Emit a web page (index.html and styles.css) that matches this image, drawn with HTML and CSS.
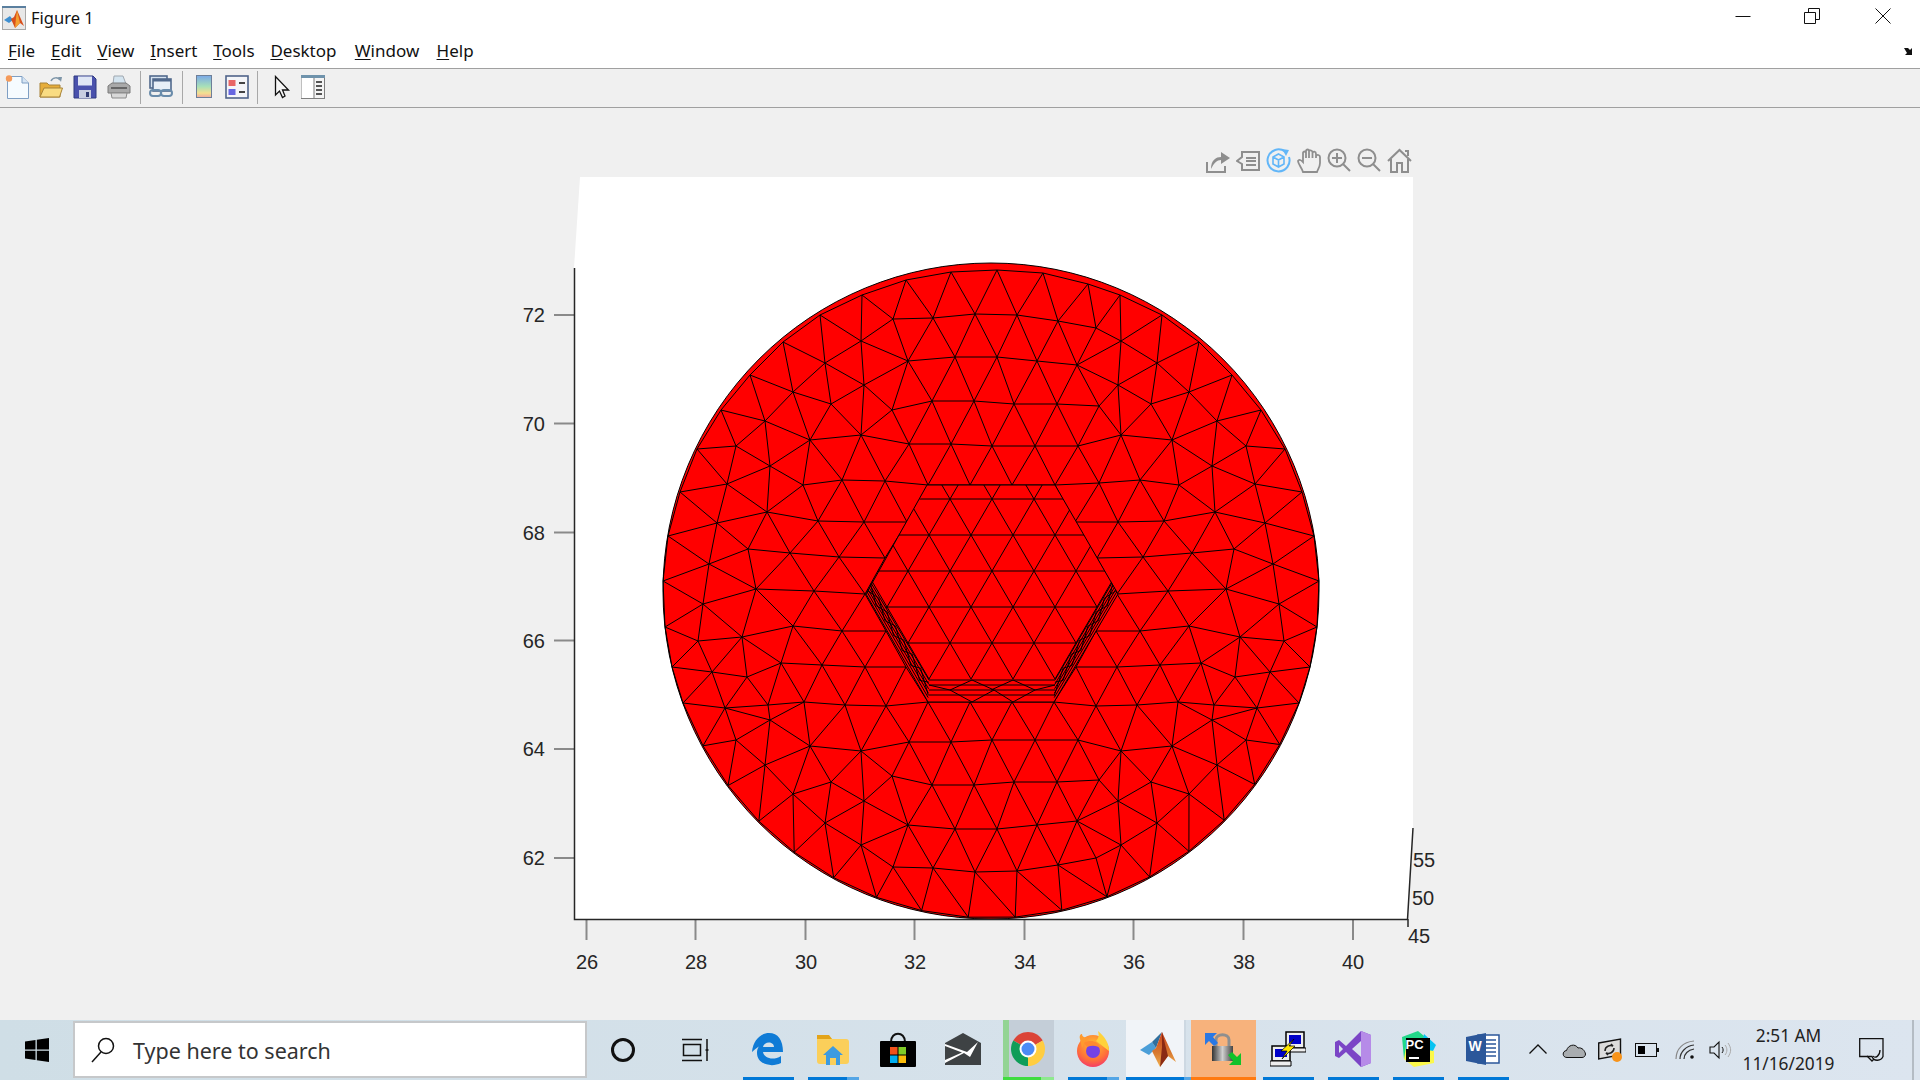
FILE: index.html
```html
<!DOCTYPE html>
<html lang="en">
<head>
<meta charset="utf-8">
<title>Figure 1</title>
<link rel="stylesheet" href="styles.css">
</head>
<body>
<div class="app">
  <header class="titlebar">
    <svg class="app-icon" width="24" height="24" viewBox="0 0 24 24">
      <rect x="0.5" y="0.5" width="23" height="23" fill="#e8e8e8" stroke="#a8a8a8"/>
      <rect x="0" y="0" width="24" height="2" fill="#5a7f9f"/>
      <polygon points="2,14 8,10 11,14 7,17" fill="#3f8fd0"/>
      <polygon points="15,4 22,20 18,17 13,22 9,13 12,11" fill="#d8501c"/>
      <polygon points="15,4 18,17 13,22 14,12" fill="#f4a030"/>
    </svg>
    <span class="title-text">Figure 1</span>
    <div class="win-controls">
      <svg class="win-min" width="16" height="16" viewBox="0 0 16 16"><path d="M0.5 8.5H15.5" stroke="#111" fill="none"/></svg>
      <svg width="16" height="16" viewBox="0 0 16 16"><path d="M0.5 4.5H11.5V15.5H0.5ZM4.5 4.5V0.5H15.5V11.5H11.5" stroke="#111" fill="none"/></svg>
      <svg width="16" height="16" viewBox="0 0 16 16"><path d="M0.5 0.5L15.5 15.5M15.5 0.5L0.5 15.5" stroke="#111" fill="none"/></svg>
    </div>
  </header>

  <nav class="menubar">
    <span class="menu-item"><u>F</u>ile</span>
    <span class="menu-item"><u>E</u>dit</span>
    <span class="menu-item"><u>V</u>iew</span>
    <span class="menu-item"><u>I</u>nsert</span>
    <span class="menu-item"><u>T</u>ools</span>
    <span class="menu-item"><u>D</u>esktop</span>
    <span class="menu-item menu-wide"><u>W</u>indow</span>
    <span class="menu-item"><u>H</u>elp</span>
    <svg class="dock-arrow" width="11" height="9" viewBox="0 0 11 9"><path d="M0 1H4L6 3L8 1V8H1L3 6Z" fill="#111"/></svg>
  </nav>

  <div class="toolbar">
    <div class="tool-group g1">
      <svg width="24" height="24" viewBox="0 0 24 24"><path d="M2.5 1.5H17L23.5 8V23.5H2.5Z" fill="#f6fbff" stroke="#7f9fc4"/><path d="M17 1.5V8H23.5" fill="#d5e4f4" stroke="#7f9fc4"/><circle cx="4" cy="3.5" r="3.2" fill="#f59a5a"/></svg>
      <svg width="24" height="24" viewBox="0 0 24 24"><path d="M1 8V22H21V10H10L8 8Z" fill="#e6ad3a" stroke="#a88338"/><path d="M1 22L5 13H23.5L20.5 22Z" fill="#f9dc82" stroke="#a88338"/><path d="M12 6C14 2 19 2 21 5" fill="none" stroke="#7d95a8" stroke-width="1.5"/><path d="M19 2L23 2L22 7Z" fill="#7d95a8"/></svg>
      <svg width="24" height="24" viewBox="0 0 24 24"><path d="M1 1H20L23 4V23H1Z" fill="#4a52ad" stroke="#2f3a80"/><rect x="5" y="1.5" width="14" height="9" fill="#dfe6f5"/><rect x="6" y="15" width="12" height="8" fill="#c8cde0"/><rect x="13" y="17" width="3" height="5" fill="#303a70"/></svg>
      <svg width="24" height="24" viewBox="0 0 24 24"><path d="M6 9L7 1H16L19 9Z" fill="#d4e4ef" stroke="#a0a8b0"/><path d="M1 11L5 8H19L23 11V18H1Z" fill="#a9a9a9" stroke="#7b7b7b"/><path d="M4 18H20L19 23H5Z" fill="#d8d8d8" stroke="#8b8b8b"/><rect x="4" y="12" width="16" height="2" fill="#666"/></svg>
    </div>
    <span class="tool-sep sep-a"></span>
    <div class="tool-group">
      <svg width="24" height="24" viewBox="0 0 24 24"><rect x="1" y="1" width="17" height="12" fill="#d5e2f0" stroke="#51698c" stroke-width="1.6"/><rect x="4" y="4" width="18" height="12" fill="#e8eff7" stroke="#51698c" stroke-width="1.6"/><rect x="4" y="4" width="18" height="2.5" fill="#51698c"/><rect x="1" y="15" width="11" height="6" rx="3" fill="none" stroke="#6a8cab" stroke-width="2"/><rect x="12" y="15" width="11" height="6" rx="3" fill="none" stroke="#6a8cab" stroke-width="2"/></svg>
    </div>
    <span class="tool-sep sep-b"></span>
    <div class="tool-group g3">
      <svg width="24" height="24" viewBox="0 0 24 24"><defs><linearGradient id="cb" x1="0" y1="0" x2="0" y2="1"><stop offset="0" stop-color="#7aa8e8"/><stop offset="0.5" stop-color="#a8e0b8"/><stop offset="0.8" stop-color="#f4e090"/><stop offset="1" stop-color="#f0a8a0"/></linearGradient></defs><rect x="4.5" y="0.5" width="15" height="22" fill="url(#cb)" stroke="#6d7f98"/></svg>
      <svg width="24" height="24" viewBox="0 0 24 24"><rect x="1" y="1" width="22" height="22" fill="#f4f5f8" stroke="#50648a" stroke-width="1.6"/><rect x="3.5" y="5" width="7" height="6" fill="#e86666"/><rect x="3.5" y="14" width="7" height="6" fill="#6666e0"/><rect x="14" y="7" width="6" height="2" fill="#444"/><rect x="14" y="16" width="6" height="2" fill="#444"/></svg>
    </div>
    <span class="tool-sep sep-c"></span>
    <div class="tool-group g4">
      <svg width="24" height="24" viewBox="0 0 24 24"><path d="M5.5 1.5V20L9.5 16L12.5 22.5L15 21L12.5 15H18.5Z" fill="#f6f6f6" stroke="#111" stroke-width="1.3"/></svg>
      <svg width="24" height="24" viewBox="0 0 24 24"><rect x="0.5" y="0.5" width="23" height="23" fill="#f4f4f4" stroke="#7e7e7e"/><rect x="0" y="0" width="24" height="3" fill="#6f93ac"/><rect x="0.5" y="3" width="12" height="20" fill="#fff"/><path d="M13 3V23" stroke="#7e7e7e"/><path d="M15 7H21M15 11H21M15 15H21M15 19H21" stroke="#555" stroke-width="2"/></svg>
    </div>
  </div>

  <main class="figure">
    <div class="axes-tools">
      <svg width="24" height="25" viewBox="0 0 24 25"><path d="M1 14V24H19V18" fill="none" stroke="#8e8e8e" stroke-width="2"/><path d="M5 21C5 12 10 9 15 9V4L24 10L15 16V12C11 12 8 15 5 21Z" fill="#8e8e8e"/></svg>
      <svg width="24" height="25" viewBox="0 0 24 25"><path d="M6 4H23V22H6V16L1 13L6 9Z" fill="none" stroke="#8e8e8e" stroke-width="2"/><path d="M10 10H20M10 13H20M10 17H20" stroke="#8e8e8e" stroke-width="2" fill="none"/></svg>
      <svg width="25" height="25" viewBox="0 0 25 25"><path d="M19 3.5A11 11 0 1 0 23 9" fill="none" stroke="#62b6f8" stroke-width="2"/><path d="M16 1L23 2L20 8Z" fill="#62b6f8"/><path d="M12.5 6L18 9V16L12.5 19L7 16V9ZM7 9L12.5 12L18 9M12.5 12V19" fill="none" stroke="#62b6f8" stroke-width="1.6"/></svg>
      <svg width="24" height="25" viewBox="0 0 24 25"><path d="M6 24C5 20 1 16 1 13C2 11 4 12 6 14V5C6 3 9 3 9 5V10V3C9 1 12 1 12 3V10V3C12 2 15 2 15.500 4V10V5C16 3 19 3 19 6V10V8C20 6 23 7 23 9V15C23 19 21 21 20 24Z" fill="none" stroke="#8e8e8e" stroke-width="1.8"/></svg>
      <svg width="24" height="25" viewBox="0 0 24 25"><circle cx="10" cy="10" r="8.500" fill="none" stroke="#8e8e8e" stroke-width="2"/><path d="M10 5V15M5 10H15M16 16L23 23" stroke="#8e8e8e" stroke-width="2" fill="none"/></svg>
      <svg width="24" height="25" viewBox="0 0 24 25"><circle cx="10" cy="10" r="8.500" fill="none" stroke="#8e8e8e" stroke-width="2"/><path d="M5 10H15M16 16L23 23" stroke="#8e8e8e" stroke-width="2" fill="none"/></svg>
      <svg width="25" height="25" viewBox="0 0 25 25"><path d="M1 13L12.500 2L24 13M4 11V24H10V15H15V24H21V11M18 3H21V8" fill="none" stroke="#8e8e8e" stroke-width="2"/></svg>
    </div>
    <svg class="plot" width="1920" height="912" viewBox="0 108 1920 912">
      <defs><clipPath id="hexclip"><polygon points="928,485 1055,485 1112,583 1055,680 929,680 871,583"/></clipPath></defs>
      <polygon points="580,177 1413,177 1413,828 1407,919 574,919 574,268" fill="#fff"/>
      <circle cx="991" cy="591" r="328" fill="#f00" stroke="#000" stroke-width="1"/>
      <g id="mesh"></g>
      <path class="tick" d="M586.500 919V940M695.500 919V940M805.500 919V940M914.500 919V940M1024.500 919V940M1133.500 919V940M1243.500 919V940M1353 919V940M554 315H574M554 423.500H574M554 532.500H574M554 640.500H574M554 749H574M554 858H574"/>
      <path class="axis" d="M574.500 268V919.500H1407.500L1413 828M1408 919V927"/>
      <g class="lbl lbl-x">
        <text x="587" y="969">26</text><text x="696" y="969">28</text><text x="806" y="969">30</text><text x="915" y="969">32</text><text x="1025" y="969">34</text><text x="1134" y="969">36</text><text x="1244" y="969">38</text><text x="1353" y="969">40</text>
      </g>
      <g class="lbl lbl-y">
        <text x="545" y="322">72</text><text x="545" y="431">70</text><text x="545" y="540">68</text><text x="545" y="648">66</text><text x="545" y="756">64</text><text x="545" y="865">62</text>
      </g>
      <g class="lbl">
        <text x="1413" y="867">55</text><text x="1412" y="905">50</text><text x="1408" y="943">45</text>
      </g>
    </svg>
  </main>

  <footer class="taskbar">
    <div class="start">
      <svg width="24" height="24" viewBox="0 0 24 24"><path d="M0 3.500L10.500 2V11.500H0ZM11.800 1.800L24 0V11.500H11.800ZM0 12.700H10.500V22L0 20.500ZM11.800 12.700H24V24L11.800 22.200Z" fill="#000"/></svg>
    </div>
    <div class="search">
      <svg width="24" height="26" viewBox="0 0 24 26"><circle cx="15" cy="9" r="7.500" fill="none" stroke="#111" stroke-width="1.500"/><path d="M10 15L1 25" stroke="#111" stroke-width="1.500"/></svg>
      <span class="search-text">Type here to search</span>
    </div>
    <div class="cortana"><span class="ring"></span></div>
    <div class="taskview">
      <svg width="28" height="24" viewBox="0 0 28 24"><path d="M0 1.500H20M0 22.500H20M1.500 6.500H18.500V17.500H1.500ZM25 1V23M23.500 12H26.500" fill="none" stroke="#111" stroke-width="1.500"/></svg>
    </div>
    <div class="task-list">
      <div class="task on">
        <svg width="34" height="34" viewBox="0 0 34 34"><path d="M1 20C2 8 10 1 18 1C27 1 32 8 32 20H12C13 26 22 29 30 24V31C20 36 6 32 6 21C6 15 10 11 15 10C10 13 6 15 1 20ZM12 15H23C23 9 13 9 12 15Z" fill="#0f7bd6"/></svg>
      </div>
      <div class="task on split">
        <svg width="32" height="34" viewBox="0 0 32 34"><path d="M0 6Q0 3 3 3H11L15 7H29Q32 7 32 10V29Q32 32 29 32H3Q0 32 0 29Z" fill="#fbcf5a"/><path d="M0 3H12L15 7H0Z" fill="#e3a41a"/><path d="M9 33V23H6L16 14L26 23H23V33Z" fill="#3d9be0"/><rect x="13" y="26" width="6" height="7" fill="#fbcf5a"/></svg>
      </div>
      <div class="task">
        <svg width="36" height="36" viewBox="0 0 36 36"><path d="M11 11C11 0 25 0 25 11" fill="none" stroke="#111" stroke-width="2"/><rect x="0" y="10" width="36" height="26" rx="1" fill="#000"/><rect x="10" y="16" width="7.500" height="7.500" fill="#f1511b"/><rect x="18.500" y="16" width="7.500" height="7.500" fill="#80cc28"/><rect x="10" y="24.500" width="7.500" height="7.500" fill="#00adef"/><rect x="18.500" y="24.500" width="7.500" height="7.500" fill="#fbbc09"/></svg>
      </div>
      <div class="task">
        <svg width="36" height="32" viewBox="0 0 36 32"><path d="M0 10L18 0L36 10V32H0Z" fill="#3e4244"/><path d="M0 11L22 19L33 9L25 24L19 20L0 30Z" fill="#fff"/><path d="M0 13L17 19.500L0 27Z" fill="#3e4244"/></svg>
      </div>
      <div class="task chrome">
        <svg width="34" height="34" viewBox="0 0 34 34"><path d="M17 17L2.300 8.500A17 17 0 0 1 31.700 8.500Z" fill="#db4437"/><path d="M17 17L17 34A17 17 0 0 1 2.300 8.500Z" fill="#0f9d58"/><path d="M17 17L31.700 8.500A17 17 0 0 1 17 34Z" fill="#ffcd40"/><circle cx="17" cy="17" r="8.500" fill="#fff"/><circle cx="17" cy="17" r="6.500" fill="#4c8bf5"/></svg>
      </div>
      <div class="task on split">
        <svg width="34" height="36" viewBox="0 0 34 36"><defs><radialGradient id="ff" cx="0.5" cy="0.3" r="0.8"><stop offset="0" stop-color="#ffbd2f"/><stop offset="0.6" stop-color="#ff7139"/><stop offset="1" stop-color="#f0267a"/></radialGradient></defs><circle cx="17" cy="20" r="16" fill="url(#ff)"/><path d="M22 0C29 6 33 12 33 20L20 10C23 7 23 4 22 0Z" fill="#ffd23a"/><path d="M4 8C3 4 5 3 6 3C6 6 9 7 12 6L6 17Z" fill="#ff9a2e"/><circle cx="17" cy="20" r="7" fill="#7542e5"/><path d="M8 12C14 8 23 10 25 18C21 14 16 14 11 16Z" fill="#ff8a2f"/></svg>
      </div>
      <div class="task matlab">
        <svg width="36" height="36" viewBox="0 0 36 36"><defs><linearGradient id="ml" x1="0" y1="0" x2="0" y2="1"><stop offset="0" stop-color="#c8401c"/><stop offset="0.6" stop-color="#d87a30"/><stop offset="1" stop-color="#f2b050"/></linearGradient></defs><polygon points="0,19 12,11 16,17 9,24" fill="#4b9ed8"/><polygon points="12,11 22,1 16,17" fill="#2f6f9e"/><polygon points="22,1 36,31 28,25 20,36 12,20 16,17" fill="url(#ml)"/><polygon points="22,1 28,25 20,36 22,16" fill="#8a2a14"/></svg>
      </div>
      <div class="task orange">
        <svg width="36" height="36" viewBox="0 0 36 36"><defs><linearGradient id="lk" x1="0" y1="0" x2="1" y2="0"><stop offset="0" stop-color="#333"/><stop offset="0.5" stop-color="#cfcfcf"/><stop offset="1" stop-color="#444"/></linearGradient></defs><path d="M11 16V9C11 2 24 2 24 9V16" fill="none" stroke="#8f8f8f" stroke-width="3"/><rect x="7" y="15" width="21" height="15" fill="url(#lk)"/><path d="M0 2H12L8 6L13 12L9 15L4 10L0 14Z" fill="#2a78e4"/><path d="M36 34H24L28 30L23 24L27 21L32 26L36 22Z" fill="#12c22a"/></svg>
      </div>
      <div class="task on">
        <svg width="36" height="36" viewBox="0 0 36 36"><rect x="16" y="1" width="18" height="16" fill="#eee" stroke="#000" stroke-width="1.500"/><rect x="19" y="4" width="12" height="9" fill="#0000c8"/><path d="M15 17H36V21H15Z" fill="#eee" stroke="#000"/><rect x="2" y="15" width="18" height="15" fill="#eee" stroke="#000" stroke-width="1.500"/><rect x="5" y="18" width="12" height="8" fill="#0000c8"/><path d="M0 30H21V35H0Z" fill="#eee" stroke="#000"/><path d="M24 8L11 20H17L12 28L25 15H19Z" fill="#ffe600" stroke="#000" stroke-width="0.700"/></svg>
      </div>
      <div class="task on">
        <svg width="36" height="36" viewBox="0 0 36 36"><path d="M26 0L36 4V32L26 36L11 21L4 27L0 25V11L4 9L11 15ZM26 10L17 18L26 26ZM4 14V22L8 18Z" fill="#7b45c6"/><path d="M26 0L36 4V32L26 36Z" fill="#b68be8"/></svg>
      </div>
      <div class="task on">
        <svg width="36" height="36" viewBox="0 0 36 36"><polygon points="2,6 18,0 30,10 20,24 4,28" fill="#21d789"/><polygon points="24,3 36,14 30,26 22,14" fill="#07c3f2"/><polygon points="6,16 34,20 34,32 14,36 4,28" fill="#fcf84a"/><rect x="6" y="7" width="24" height="24" fill="#000"/><rect x="9" y="26" width="10" height="2" fill="#fff"/></svg>
        <span class="pc-text">PC</span>
      </div>
      <div class="task on">
        <svg width="34" height="34" viewBox="0 0 34 34"><rect x="12" y="3" width="21" height="28" fill="#fff" stroke="#2b579a" stroke-width="1.500"/><path d="M19 8H30M19 12H30M19 16H30M19 20H30M19 24H30" stroke="#2b579a" stroke-width="1.500"/><path d="M0 5L20 1V33L0 29Z" fill="#2b579a"/></svg>
        <span class="word-text">W</span>
      </div>
    </div>
    <div class="tray">
      <svg class="t-caret" width="18" height="10" viewBox="0 0 18 10"><path d="M0.500 9.500L9 1L17.500 9.500" fill="none" stroke="#111" stroke-width="1.300"/></svg>
      <svg class="t-cloud" width="24" height="15" viewBox="0 0 24 15"><path d="M5 14.500C0 14.500 0 8 4.500 7.500C6 2 13 0 16 5C20 4 23 8 23.500 11C23.500 13 22 14.500 20 14.500Z" fill="#a9adb0" stroke="#111"/></svg>
      <svg class="t-sync" width="25" height="25" viewBox="0 0 25 25"><path d="M0.700 5L22.500 1V17L0.700 21Z" fill="#dcdcdc" stroke="#111" stroke-width="1.400"/><path d="M7 13C7 8 12 7 15 8L13 6M16 10C16 15 11 16 8 15L10 17" fill="none" stroke="#222" stroke-width="1.500"/><circle cx="19" cy="19" r="5" fill="#f7931a"/></svg>
      <svg class="t-batt" width="24" height="14" viewBox="0 0 24 14"><rect x="0.500" y="0.500" width="21" height="13" fill="none" stroke="#111"/><rect x="3" y="3" width="7" height="8" fill="#000"/><rect x="22" y="5" width="2" height="4" fill="#111"/></svg>
      <svg class="t-wifi" width="20" height="20" viewBox="0 0 20 20"><path d="M1 19C1 9 8 2 19 1" fill="none" stroke="#888" stroke-width="1.200"/><path d="M5 19C5 12 11 6 19 5M9 19C9 14 13 10 19 9" fill="none" stroke="#333" stroke-width="1.200"/><circle cx="17" cy="17" r="1.800" fill="#111"/></svg>
      <svg class="t-vol" width="23" height="20" viewBox="0 0 23 20"><path d="M1 7H5L10 2V18L5 13H1Z" fill="none" stroke="#111" stroke-width="1.100"/><path d="M13 7C14.500 9 14.500 11 13 13" fill="none" stroke="#111"/><path d="M16 5C18.500 8 18.500 12 16 15M19 3C22.500 8 22.500 12 19 17" fill="none" stroke="#aaa"/></svg>
      <div class="clock"><span>2:51 AM</span><span>11/16/2019</span></div>
      <svg class="t-note" width="25" height="25" viewBox="0 0 25 25"><path d="M0.700 0.700H24V18.500C22 23 15 24 13 18.500H8L0.700 18.500Z" fill="none" stroke="#111" stroke-width="1.300"/><path d="M8 18L13 23L15 21" fill="none" stroke="#111" stroke-width="1.300"/><path d="M21 12C21 18 16 21 14 18" fill="none" stroke="#111" stroke-width="1.300"/></svg>
      <span class="tray-end"></span>
    </div>
  </footer>
</div>
<script src="mesh.js"></script>
</body>
</html>
```

FILE: styles.css
```css
* { box-sizing: border-box; }
html, body { margin: 0; height: 100%; }
body { overflow: hidden; background: #f0f0f0; font-family: "Noto Sans", "Open Sans", sans-serif; color: #111; }
svg { display: block; flex: none; }
.app { display: flex; flex-direction: column; height: 1080px; }

.titlebar { height: 34px; background: #fff; display: flex; align-items: center; padding: 0 29px 0 2px; flex: none; }
.app-icon { margin-top: 2px; }
.title-text { margin-left: 5px; font-size: 16.500px; margin-top: 1px; }
.win-controls { margin-left: auto; display: flex; gap: 55px; align-items: center; margin-top: -2px; }
.win-min { margin-right: -2px; }

.menubar { height: 35px; background: #fff; border-bottom: 1px solid #a0a0a0; display: flex; align-items: center; gap: 15.800px; padding: 0 5px 2px 8px; font-size: 17px; flex: none; }
.menu-item u { text-underline-offset: 2px; }
.menu-wide { margin-left: 2.500px; margin-right: 1.500px; }
.dock-arrow { margin-left: auto; margin-top: 3px; }

.toolbar { height: 39px; background: #f0f0f0; border-bottom: 1px solid #a0a0a0; display: flex; align-items: center; padding: 0 0 2px 5px; flex: none; }
.tool-group { display: flex; gap: 10px; }
.g3 { gap: 9px; }
.g4 { gap: 7px; }
.tool-sep { width: 1px; height: 33px; background: #a8a8a8; }
.sep-a { margin: 0 8px 0 9px; }
.sep-b { margin: 0 9px; }
.sep-c { margin: 0 12px 0 8px; }

.figure { flex: 1; position: relative; min-height: 0; background: #f0f0f0; }
.plot { position: absolute; left: 0; top: 0; }
.axes-tools { position: absolute; left: 1206px; top: 40px; display: flex; gap: 6px; z-index: 1; }
.tick { stroke: #8a8a8a; stroke-width: 2; fill: none; }
.axis { stroke: #262626; stroke-width: 1.500; fill: none; }
.lbl { font-family: "Liberation Sans", Arial, sans-serif; font-size: 20px; fill: #262626; }
.lbl-x { text-anchor: middle; }
.lbl-y { text-anchor: end; }
.mesh-line { stroke: #000; stroke-width: 1; fill: none; }
.hex { fill: #f00; stroke: #000; stroke-width: 1; }

.taskbar { height: 60px; flex: none; display: flex; align-items: stretch; background: linear-gradient(90deg, #cfdee6, #dce5ef); }
.start { width: 73px; display: flex; align-items: center; justify-content: center; }
.search { width: 514px; margin: 1px 0 2px; background: #fff; border: 2px solid #c6c8ca; display: flex; align-items: center; padding-left: 16px; gap: 18px; }
.search-text { font-size: 21.500px; color: #333; margin-top: 2px; }
.cortana { width: 72px; display: flex; align-items: center; justify-content: center; }
.ring { width: 24px; height: 24px; border-radius: 50%; border: 3.500px solid #111; }
.taskview { width: 76.500px; display: flex; align-items: center; padding-left: 23px; }
.task-list { display: flex; }
.task { width: 65px; position: relative; display: flex; align-items: center; justify-content: center; padding-bottom: 3px; }
.task.on::after { content: ""; position: absolute; left: 7px; right: 7px; bottom: 0; height: 3px; background: #0078d7; }
.task.split::before { content: ""; position: absolute; right: 7px; width: 12px; bottom: 0; height: 3px; background: #54a6e6; z-index: 1; }
.chrome { background: linear-gradient(90deg, transparent 7px, #93d494 7px, #93d494 13px, #c4ced8 13px, #c4ced8 58px, transparent 58px); }
.chrome::after { content: ""; position: absolute; left: 7px; right: 7px; bottom: 0; height: 3px; background: linear-gradient(90deg, #3fdc3f 75%, #8ee98e 75%); }
.matlab { background: linear-gradient(90deg, #f1f4f8 58px, #cdd8e2 58px, #cdd8e2 60px, transparent 60px); }
.matlab::after { content: ""; position: absolute; left: 0; right: 0; bottom: 0; height: 3px; background: linear-gradient(90deg, #0078d7 90%, #54a6e6 90%); }
.orange { background: #f7b27c; }
.orange::after { content: ""; position: absolute; left: 0; right: 0; bottom: 0; height: 3px; background: #ff7a10; }
.pc-text { position: absolute; left: 20px; top: 17px; color: #fff; font-family: "Liberation Sans", sans-serif; font-weight: 700; font-size: 13px; }
.word-text { position: absolute; left: 18px; top: 18px; color: #fff; font-family: "Liberation Sans", sans-serif; font-weight: 700; font-size: 14px; }
.tray { flex: 1; display: flex; align-items: center; position: relative; padding-left: 13px; }
.t-caret { margin-bottom: 2px; }
.t-cloud { margin-left: 15px; }
.t-sync { margin-left: 12px; }
.t-batt { margin-left: 12px; }
.t-wifi { margin-left: 16px; }
.t-vol { margin-left: 14px; }
.clock { width: 110px; margin-left: 2px; display: flex; flex-direction: column; align-items: center; font-size: 17.300px; line-height: 28px; padding-bottom: 1px; color: #222; }
.t-note { margin-left: 15px; }
.tray-end { position: absolute; right: 6px; top: 0; bottom: 0; width: 2px; background: #b4bcc4; }
```

FILE: mesh.js
```js
// Builds the finite-element mesh drawn on the red disc: a Delaunay triangulation
// of the measured node positions, plus a regular lattice inside the hexagon.
(function () {
  var MX = 1982, CX = 991, CY = 591;
  var topLeft = [[893,319],[933,318],[861,341],[908,361],[955,357],[825,363],[864,385],[793,392],[831,404],[892,410],[932,401],[765,421],[810,440],[861,435],[909,444],[951,444],[736,446],[770,466],[842,480],[885,481],[727,484],[803,485],[928,485]];
  var topRight = [[975,314],[1017,315],[1058,321],[1096,328],[997,357],[1037,361],[1077,365],[974,401],[1014,404],[1057,404],[1099,406],[992,446],[1035,446],[1078,446],[970,485],[1012,485],[1055,485],[1099,483]];
  var mid = [[767,512],[717,523],[818,521],[864,522],[907,522],[748,549],[709,564],[790,553],[839,557],[885,558],[756,589],[703,604],[814,591],[865,594],[742,637],[698,641],[793,626],[842,631],[886,631],[781,663],[712,672],[747,677],[822,665],[865,667],[906,667],[725,708],[768,705],[804,702],[845,705],[886,706]];
  var rimLeft = [[862,295],[820,315],[783,342],[750,375],[721,410],[697,449],[680,492],[668,536],[663,581],[665,627],[672,667],[683,703]];
  var rimTop = [[906,280],[951,272],[997,270],[1043,273],[1088,284]];
  var pts = [];
  function add(p) { pts.push([p[0], p[1]]); }
  topLeft.forEach(add);
  topRight.forEach(add);
  topLeft.forEach(function (p) { if (p[0] < 880) add([MX - p[0], p[1]]); });
  mid.forEach(function (p) { add(p); add([MX - p[0], p[1]]); });
  [[928,702],[970,702],[1012,702],[1054,702]].forEach(add);
  // lower half mirrors the upper half
  topLeft.concat(topRight).forEach(function (p) {
    if (p[1] <= 470) add([p[0], 1186 - p[1]]);
    if (p[1] <= 470 && p[0] < 880) add([MX - p[0], 1186 - p[1]]);
  });
  rimTop.forEach(add);
  rimLeft.forEach(function (p) { add(p); add([MX - p[0], p[1]]); });
  for (var a = 28; a < 153; a += 8.25) {
    var r = a * Math.PI / 180;
    add([CX + 327 * Math.cos(r), CY + 327 * Math.sin(r)]);
  }
  // tiny deterministic offsets avoid cocircular lattice nodes
  pts.forEach(function (p, i) { p[0] += ((i * 7) % 11) * 0.002; p[1] += ((i * 5) % 13) * 0.002; });

  function circum(t) {
    var a = pts[t[0]], b = pts[t[1]], c = pts[t[2]];
    var d = 2 * (a[0] * (b[1] - c[1]) + b[0] * (c[1] - a[1]) + c[0] * (a[1] - b[1]));
    var A = a[0] * a[0] + a[1] * a[1], B = b[0] * b[0] + b[1] * b[1], C = c[0] * c[0] + c[1] * c[1];
    var x = (A * (b[1] - c[1]) + B * (c[1] - a[1]) + C * (a[1] - b[1])) / d;
    var y = (A * (c[0] - b[0]) + B * (a[0] - c[0]) + C * (b[0] - a[0])) / d;
    return { t: t, x: x, y: y, r: (a[0] - x) * (a[0] - x) + (a[1] - y) * (a[1] - y) };
  }
  var n = pts.length;
  pts.push([-20000, -20000], [24000, -20000], [1000, 30000]);
  var tris = [circum([n, n + 1, n + 2])];
  for (var i = 0; i < n; i++) {
    var p = pts[i], keep = [], edges = {};
    tris.forEach(function (c) {
      var dx = p[0] - c.x, dy = p[1] - c.y;
      if (dx * dx + dy * dy < c.r) {
        [[0, 1], [1, 2], [2, 0]].forEach(function (e) {
          var u = c.t[e[0]], v = c.t[e[1]];
          var k = Math.min(u, v) + "_" + Math.max(u, v);
          edges[k] = edges[k] === undefined ? [u, v] : null;
        });
      } else keep.push(c);
    });
    Object.keys(edges).forEach(function (k) {
      if (edges[k]) keep.push(circum([edges[k][0], edges[k][1], i]));
    });
    tris = keep;
  }

  var hex = [[927,485],[1055,485],[1118,594],[1054,702],[928,702],[866,594]];
  function inside(poly, x, y) {
    var c = false;
    for (var i = 0, j = poly.length - 1; i < poly.length; j = i++) {
      if ((poly[i][1] > y) !== (poly[j][1] > y) &&
          x < (poly[j][0] - poly[i][0]) * (y - poly[i][1]) / (poly[j][1] - poly[i][1]) + poly[i][0]) c = !c;
    }
    return c;
  }
  var seen = {}, d = "";
  tris.forEach(function (c) {
    var t = c.t;
    if (t[0] >= n || t[1] >= n || t[2] >= n) return;
    var mx = (pts[t[0]][0] + pts[t[1]][0] + pts[t[2]][0]) / 3;
    var my = (pts[t[0]][1] + pts[t[1]][1] + pts[t[2]][1]) / 3;
    if (inside(hex, mx, my)) return;
    [[0, 1], [1, 2], [2, 0]].forEach(function (e) {
      var u = t[e[0]], v = t[e[1]], k = Math.min(u, v) + "_" + Math.max(u, v);
      if (seen[k]) return;
      seen[k] = 1;
      d += "M" + pts[u][0].toFixed(1) + " " + pts[u][1].toFixed(1) + "L" + pts[v][0].toFixed(1) + " " + pts[v][1].toFixed(1);
    });
  });

  // hexagon lattice: rows 36px apart, nodes 42px apart
  var lat = "";
  [499, 535, 571, 607, 643].forEach(function (y) { lat += "M860 " + y + "H1125"; });
  for (var k = -8; k <= 8; k++) {
    var x0 = 992 + 42 * k;
    lat += "M" + (x0 - 42) + " 427L" + (x0 + 105) + " 679";
    lat += "M" + (x0 + 42) + " 427L" + (x0 - 105) + " 679";
  }

  // thin bands along the lower sides of the hexagon
  var band = "";
  function lerp(a, b, t) { return [a[0] + (b[0] - a[0]) * t, a[1] + (b[1] - a[1]) * t]; }
  function seg(a, b) { band += "M" + a[0].toFixed(1) + " " + a[1].toFixed(1) + "L" + b[0].toFixed(1) + " " + b[1].toFixed(1); }
  [[[871,583],[929,680],[866,594],[928,702]], [[1112,583],[1055,680],[1118,594],[1054,702]]].forEach(function (s) {
    [0, 0.2, 0.4, 0.6, 0.8].forEach(function (t) { seg(lerp(s[0], s[2], t), lerp(s[1], s[3], t)); });
    for (var q = 0; q < 7; q++) {
      var t0 = q / 7, t1 = (q + 1) / 7;
      seg(lerp(lerp(s[0], s[2], 0.1), lerp(s[1], s[3], 0.1), t0), lerp(lerp(s[0], s[2], 0.7), lerp(s[1], s[3], 0.7), t1));
      seg(lerp(lerp(s[0], s[2], 0.7), lerp(s[1], s[3], 0.7), t0), lerp(lerp(s[0], s[2], 0.1), lerp(s[1], s[3], 0.1), t1));
    }
  });
  [680, 685, 690, 695].forEach(function (y) { seg([929, y], [1055, y]); });
  [[972, 680, 950, 690], [972, 680, 994, 690], [1013, 680, 991, 690], [1013, 680, 1035, 690],
   [950, 690, 972, 702], [950, 690, 929, 685], [994, 690, 972, 702], [994, 690, 1013, 702],
   [1035, 690, 1013, 702], [1035, 690, 1055, 685]].forEach(function (s) { seg([s[0], s[1]], [s[2], s[3]]); });

  var hexPts = hex.map(function (p) { return p.join(","); }).join(" ");
  document.getElementById("mesh").innerHTML =
    '<path class="mesh-line" d="' + d + '"/>' +
    '<polygon class="hex" points="' + hexPts + '"/>' +
    '<path class="mesh-line" clip-path="url(#hexclip)" d="' + lat + '"/>' +
    '<path class="mesh-line" d="' + band + '"/>';
})();
```
